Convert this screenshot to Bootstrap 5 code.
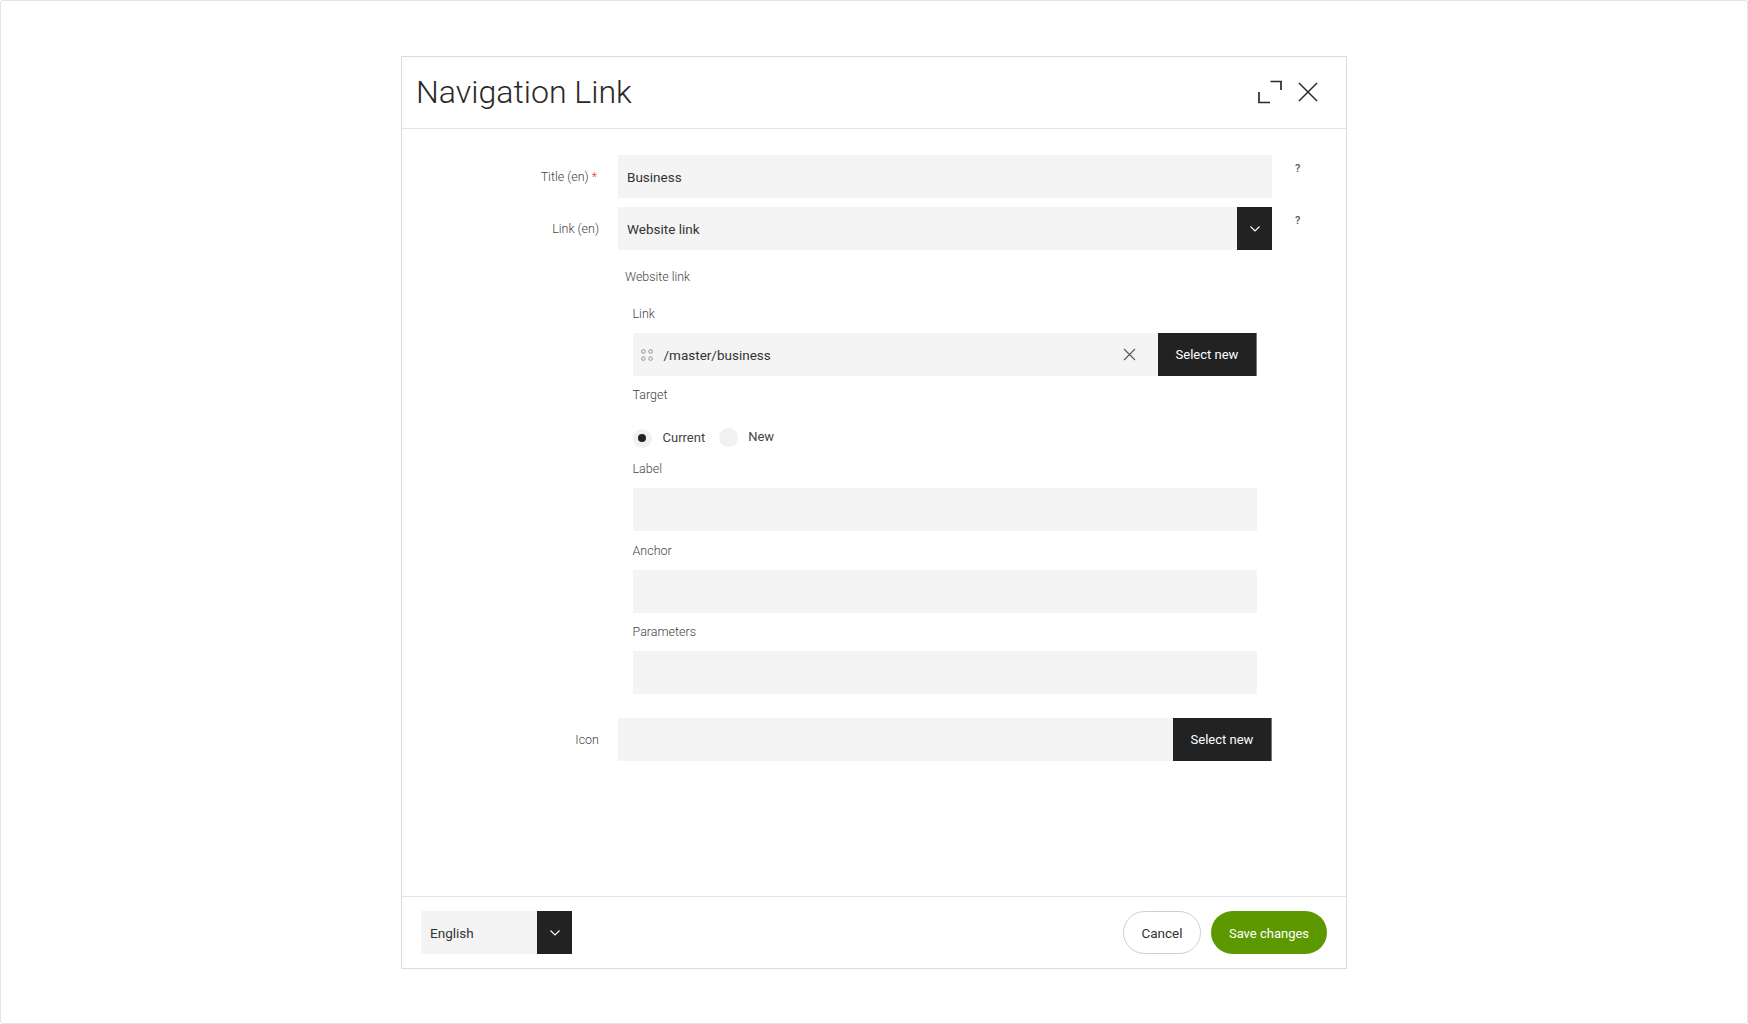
<!DOCTYPE html>
<html lang="en">
<head>
<meta charset="utf-8">
<title>Navigation Link</title>
<link rel="stylesheet" href="https://cdn.jsdelivr.net/npm/bootstrap@5.3.0/dist/css/bootstrap.min.css">
<style>
html, body { height: 100%; }
body { font-family: Roboto, "Liberation Sans", sans-serif; color: #333; background: #fff; }
.page-frame { height: 1024px; border: 1px solid #e4e4e4; border-radius: 3px; padding: 55px 400px 56px; }
.dlg { height: 913px; border: 1px solid #dcdcdc; background: #fff; }
.dlg-head { height: 72px; border-bottom: 1px solid #e2e2e2; padding: 0 28px 2px 14px; flex: none; }
.dlg-title { font-size: 32.1px; font-weight: 300; color: #2a2a2a; margin: 2px 0 0; line-height: 1; }
.dlg-body { padding-top: 26px; }
.dlg-foot { height: 72px; border-top: 1px solid #e2e2e2; padding: 14px 19px 14px 19px; flex: none; }
.icon-btn { background: none; border: 0; padding: 0; line-height: 0; }
.field-row { display: flex; margin-bottom: 9px; }
.side-label { width: 216px; flex: none; padding-right: 19px; text-align: right; font-size: 12.5px; font-weight: 300; color: #444; height: 43px; line-height: 43px; margin: 0; }
.side-label-mid { line-height: 44px; }
.side-space { width: 216px; flex: none; }
.req { color: #e53935; margin-right: 2px; }
.field-main { width: 654px; flex: none; }
.hint { font-size: 11px; font-weight: 500; color: #555; margin-left: 23px; margin-top: 6px; line-height: 16px; }
.soft-input.form-control { background-color: #f4f4f4; border: 0; border-radius: 0; height: 43px; font-size: 14px; color: #333; padding: 0 9px; box-shadow: none; margin-bottom: 8.7px; }
.soft-input.form-control:last-child { margin-bottom: 0; }
.soft-box { background: #f4f4f4; height: 43px; font-size: 13.5px; color: #333; padding: 0 9px; line-height: 45px; }
.soft-link { padding-left: 8px; padding-right: 9px; line-height: 43px; }
.dark-tab { width: 35px; height: 43px; background: #222; flex: none; }
.dark-btn.btn { background: #222; color: #fff; border: 0; border-radius: 0; height: 43px; width: 99px; padding: 0; font-size: 13px; font-weight: 400; flex: none; border-right: 1px solid #777; }
.group-title { font-size: 12.4px; font-weight: 300; color: #444; padding-left: 7px; height: 20px; line-height: 20px; margin: 17px 0 16px; }
.sub-wrap { padding-left: 14.5px; width: 639px; margin-bottom: 23.6px; }
.sub-label { font-size: 12.5px; font-weight: 300; color: #444; display: block; margin: 0 0 10px; height: 20px; line-height: 21px; }
.sub-target { margin-top: -2px; margin-bottom: 12px; }
.sub-after-radio { margin-top: 0; }
.sub-gap { margin-bottom: 10px; }
.drag { margin-right: 11px; flex: none; }
.clear-x { margin-right: 13px; flex: none; }
.link-val { position: relative; top: 1px; }
.radio-dot { width: 19px; height: 19px; border-radius: 50%; background: #f1f1f1; display: inline-flex; align-items: center; justify-content: center; flex: none; }
.radio-dot.on::after { content: ""; width: 8px; height: 8px; background: #222; border-radius: 50%; }
.radio-text { font-size: 13px; font-weight: 400; color: #444; }
.radio-current { margin-left: 11px; margin-right: 14px; }
.radio-new { margin-left: 10px; position: relative; top: -1px; }
.radio-second { position: relative; top: -1px; }
.radio-line { height: 42px; padding-top: 2px; margin-top: 2px; }
.btn-cancel.btn { height: 43px; width: 78px; border: 1px solid #cfcfcf; border-radius: 22px; background: #fff; color: #333; font-size: 13.5px; font-weight: 400; padding: 1px 0 0; }
.btn-save.btn { height: 43px; width: 116px; border: 0; border-radius: 22px; background: #5c9900; color: #fff; font-size: 13px; font-weight: 400; padding: 2px 0 0; }
.foot-gap { gap: 10px; }
.lang-box { width: 116px; }
</style>
</head>
<body>
<div class="page-frame">
  <div class="dlg d-flex flex-column">
    <div class="dlg-head d-flex align-items-center justify-content-between">
      <h1 class="dlg-title">Navigation Link</h1>
      <div class="d-flex align-items-center gap-3">
        <button class="icon-btn" type="button" aria-label="Expand">
          <svg width="24" height="24" viewBox="0 0 24 24" fill="none" stroke="#2a2a2a" stroke-width="1.7"><path d="M1 12v10.5h11M12.5 1.5H23V10"/></svg>
        </button>
        <button class="icon-btn" type="button" aria-label="Close">
          <svg width="20" height="20" viewBox="0 0 20 20" fill="none" stroke="#2a2a2a" stroke-width="1.5"><path d="M1 1l18 18M19 1L1 19"/></svg>
        </button>
      </div>
    </div>

    <div class="dlg-body flex-grow-1">
      <div class="field-row">
        <label class="side-label">Title (en) <span class="req">*</span></label>
        <div class="field-main"><div class="soft-box">Business</div></div>
        <div class="hint">?</div>
      </div>
      <div class="field-row mb-0">
        <label class="side-label">Link (en)</label>
        <div class="field-main d-flex">
          <div class="soft-box flex-grow-1">Website link</div>
          <div class="dark-tab d-flex align-items-center justify-content-center">
            <svg width="10" height="6" viewBox="0 0 10 6" fill="none" stroke="#fff" stroke-width="1.1"><path d="M.5.5L5 5 9.5.5"/></svg>
          </div>
        </div>
        <div class="hint">?</div>
      </div>

      <div class="d-flex">
        <div class="side-space"></div>
        <div class="field-main">
          <div class="group-title">Website link</div>
          <div class="sub-wrap">
            <span class="sub-label">Link</span>
            <div class="d-flex sub-gap">
              <div class="soft-box soft-link flex-grow-1 d-flex align-items-center">
                <svg class="drag" width="12" height="12" viewBox="0 0 12 12" fill="none" stroke="#888" stroke-width=".9"><circle cx="2.4" cy="2.4" r="1.8"/><circle cx="9.6" cy="2.4" r="1.8"/><circle cx="2.4" cy="9.6" r="1.8"/><circle cx="9.6" cy="9.6" r="1.8"/></svg>
                <span class="flex-grow-1 link-val">/master/business</span>
                <svg class="clear-x" width="13" height="13" viewBox="0 0 13 13" fill="none" stroke="#555" stroke-width="1.1"><path d="M1 1l11 11M12 1L1 12"/></svg>
              </div>
              <button class="btn dark-btn" type="button">Select new</button>
            </div>
            <span class="sub-label sub-target">Target</span>
            <div class="radio-line d-flex align-items-center">
              <span class="radio-dot on"></span>
              <span class="radio-text radio-current">Current</span>
              <span class="radio-dot radio-second"></span>
              <span class="radio-text radio-new">New</span>
            </div>
            <span class="sub-label sub-after-radio">Label</span>
            <input class="form-control soft-input" type="text" aria-label="Label">
            <span class="sub-label">Anchor</span>
            <input class="form-control soft-input" type="text" aria-label="Anchor">
            <span class="sub-label">Parameters</span>
            <input class="form-control soft-input" type="text" aria-label="Parameters">
          </div>
        </div>
      </div>

      <div class="field-row">
        <label class="side-label side-label-mid">Icon</label>
        <div class="field-main d-flex">
          <div class="soft-box flex-grow-1"></div>
          <button class="btn dark-btn" type="button">Select new</button>
        </div>
      </div>
    </div>

    <div class="dlg-foot d-flex align-items-center justify-content-between">
      <div class="d-flex">
        <div class="soft-box lang-box">English</div>
        <div class="dark-tab d-flex align-items-center justify-content-center">
          <svg width="10" height="6" viewBox="0 0 10 6" fill="none" stroke="#fff" stroke-width="1.1"><path d="M.5.5L5 5 9.5.5"/></svg>
        </div>
      </div>
      <div class="d-flex foot-gap">
        <button class="btn btn-cancel" type="button">Cancel</button>
        <button class="btn btn-save" type="button">Save changes</button>
      </div>
    </div>
  </div>
</div>
<script src="https://cdn.jsdelivr.net/npm/bootstrap@5.3.0/dist/js/bootstrap.bundle.min.js"></script>
</body>
</html>
